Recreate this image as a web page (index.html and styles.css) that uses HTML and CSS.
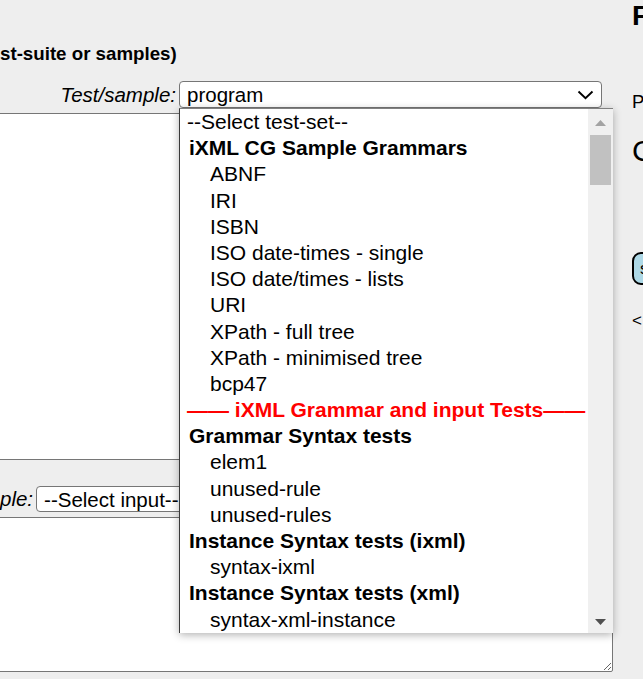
FILE: index.html
```html
<!DOCTYPE html>
<html lang="en">
<head>
<meta charset="utf-8">
<title>iXML test runner</title>
<link rel="stylesheet" href="styles.css">
</head>
<body>
<div class="page">
  <section class="left">
    <h3 class="section-title">st-suite or samples)</h3>
    <div class="field-row">
      <label class="field-label label-test" for="testset">Test/sample:</label>
      <div class="select-wrap wrap-test">
        <select id="testset" class="select"><option>program</option></select>
        <svg class="chevron" width="17" height="10" viewBox="0 0 17 10"><path d="M1.5 1.5 L8.5 8.2 L15.5 1.5" fill="none" stroke="#000" stroke-width="1.9"/></svg>
        <div class="popup">
          <ul class="popup-list">
            <li class="opt">--Select test-set--</li>
            <li class="grp">iXML CG Sample Grammars</li>
            <li class="opt sub">ABNF</li>
            <li class="opt sub">IRI</li>
            <li class="opt sub">ISBN</li>
            <li class="opt sub">ISO date-times - single</li>
            <li class="opt sub">ISO date/times - lists</li>
            <li class="opt sub">URI</li>
            <li class="opt sub">XPath - full tree</li>
            <li class="opt sub">XPath - minimised tree</li>
            <li class="opt sub">bcp47</li>
            <li class="opt sep">—— iXML Grammar and input Tests——</li>
            <li class="grp">Grammar Syntax tests</li>
            <li class="opt sub">elem1</li>
            <li class="opt sub">unused-rule</li>
            <li class="opt sub">unused-rules</li>
            <li class="grp">Instance Syntax tests (ixml)</li>
            <li class="opt sub">syntax-ixml</li>
            <li class="grp">Instance Syntax tests (xml)</li>
            <li class="opt sub">syntax-xml-instance</li>
          </ul>
          <div class="scrollbar">
            <div class="sb-btn sb-up"><svg width="11" height="6" viewBox="0 0 11 6"><path d="M0 6 L5.5 0 L11 6 Z" fill="#a3a3a3"/></svg></div>
            <div class="sb-track"><div class="sb-thumb"></div></div>
            <div class="sb-btn sb-down"><svg width="11" height="6" viewBox="0 0 11 6"><path d="M0 0 L11 0 L5.5 6 Z" fill="#505050"/></svg></div>
          </div>
        </div>
      </div>
    </div>
    <textarea class="editor editor-grammar" aria-label="Grammar"></textarea>
    <div class="field-row row-input">
      <label class="field-label label-input" for="inputset">ple:</label>
      <div class="select-wrap wrap-input">
        <select id="inputset" class="select"><option>--Select input--</option></select>
        <svg class="chevron" width="17" height="10" viewBox="0 0 17 10"><path d="M1.5 1.5 L8.5 8.2 L15.5 1.5" fill="none" stroke="#000" stroke-width="1.9"/></svg>
      </div>
    </div>
    <textarea class="editor editor-input" aria-label="Input"></textarea>
  </section>
  <aside class="right">
    <h2 class="right-title">F</h2>
    <p class="right-small">P</p>
    <p class="right-big">C</p>
    <button class="run-btn" type="button">s</button>
    <p class="right-nav">&lt;</p>
  </aside>
</div>
</body>
</html>
```

FILE: styles.css
```css
html, body {
  margin: 0;
  padding: 0;
  overflow: hidden;
  background: #eeeeee;
}

body {
  font-family: "Liberation Sans", Arial, sans-serif;
  color: #000;
  width: 643px;
  height: 679px;
}

.page {
  display: flex;
  gap: 19px;
  width: 643px;
  height: 679px;
  overflow: hidden;
}

.left {
  flex: 0 0 613px;
  width: 613px;
  display: flex;
  flex-direction: column;
}

.section-title {
  margin: 43px 0 0 0;
  font-size: 18.72px;
  line-height: 22px;
  font-weight: bold;
  white-space: nowrap;
}

.field-row {
  display: flex;
  align-items: center;
  gap: 3px;
  margin-top: 16px;
  height: 27px;
}

.row-input {
  margin-top: 26px;
  height: 26px;
}

.field-label {
  font-style: italic;
  font-size: 20.5px;
  text-align: right;
  white-space: nowrap;
}

.label-test {
  flex: 0 0 176px;
}

.label-input {
  flex: 0 0 33px;
}

.select-wrap {
  position: relative;
  height: 100%;
}

.wrap-test {
  width: 423px;
}

.wrap-input {
  width: 210px;
}

.select {
  appearance: none;
  -webkit-appearance: none;
  box-sizing: border-box;
  width: 100%;
  height: 100%;
  margin: 0;
  padding: 0 0 0 7px;
  border: 1px solid #767676;
  border-radius: 4px;
  background: #fff;
  font-family: "Liberation Sans", Arial, sans-serif;
  font-size: 20.5px;
  color: #000;
}

.chevron {
  position: absolute;
  right: 8px;
  top: 9px;
  pointer-events: none;
}

.editor {
  display: block;
  box-sizing: border-box;
  margin: 5px 0 0 -3px;
  width: 616px;
  border: 1px solid #767676;
  border-radius: 2px;
  background: #fff;
  resize: both;
  font-family: "Liberation Mono", monospace;
  font-size: 13px;
}

.editor-grammar {
  height: 347px;
}

.editor-input {
  height: 155px;
}

/* open dropdown list */
.popup {
  position: absolute;
  left: 0;
  top: 27px;
  width: 434px;
  height: 525px;
  box-sizing: border-box;
  background: #fff;
  border-top: 1px solid #808080;
  border-left: 1px solid #3a3a3a;
  box-shadow: 0 2px 8px rgba(0, 0, 0, 0.3);
  display: flex;
  z-index: 5;
}

.popup-list {
  list-style: none;
  margin: 0;
  padding: 0;
  flex: 1 1 auto;
  overflow: hidden;
  font-size: 21px;
}

.popup-list li {
  height: 26.2px;
  line-height: 26.2px;
  white-space: nowrap;
}

.opt {
  padding-left: 7px;
}

.grp {
  padding-left: 9px;
  font-weight: bold;
}

.sub {
  padding-left: 30px;
}

.sep {
  color: #ff0000;
  font-weight: bold;
}

.scrollbar {
  flex: 0 0 25px;
  width: 25px;
  background: #f0f0f0;
  display: flex;
  flex-direction: column;
}

.sb-btn {
  height: 26px;
  display: flex;
  justify-content: center;
}

.sb-up {
  align-items: flex-start;
  padding-top: 11px;
  box-sizing: border-box;
}

.sb-down {
  align-items: flex-start;
  padding-top: 12px;
  box-sizing: border-box;
}

.sb-btn svg {
  display: block;
  margin-left: -1px;
}

.sb-track {
  flex: 1 1 auto;
  padding: 0 2px;
}

.sb-thumb {
  height: 50px;
  background: #c1c1c1;
}

/* right column */
.right {
  flex: 0 0 200px;
  display: flex;
  flex-direction: column;
  align-items: flex-start;
}

.right-title {
  margin: 0;
  font-size: 28px;
  line-height: 32px;
  font-weight: bold;
}

.right-small {
  margin: 60px 0 0 0;
  font-size: 18.5px;
  line-height: 20px;
}

.right-big {
  margin: 22px 0 0 0;
  font-size: 30px;
  line-height: 34px;
}

.run-btn {
  margin-top: 84px;
  width: 70px;
  height: 33px;
  border: 2px solid #000;
  border-radius: 9px;
  background: #add8e6;
  font-family: "Liberation Sans", Arial, sans-serif;
  font-size: 17px;
  text-align: left;
  padding: 0 6px;
}

.right-nav {
  margin: 26px 0 0 0;
  font-size: 17px;
  line-height: 20px;
}
```
